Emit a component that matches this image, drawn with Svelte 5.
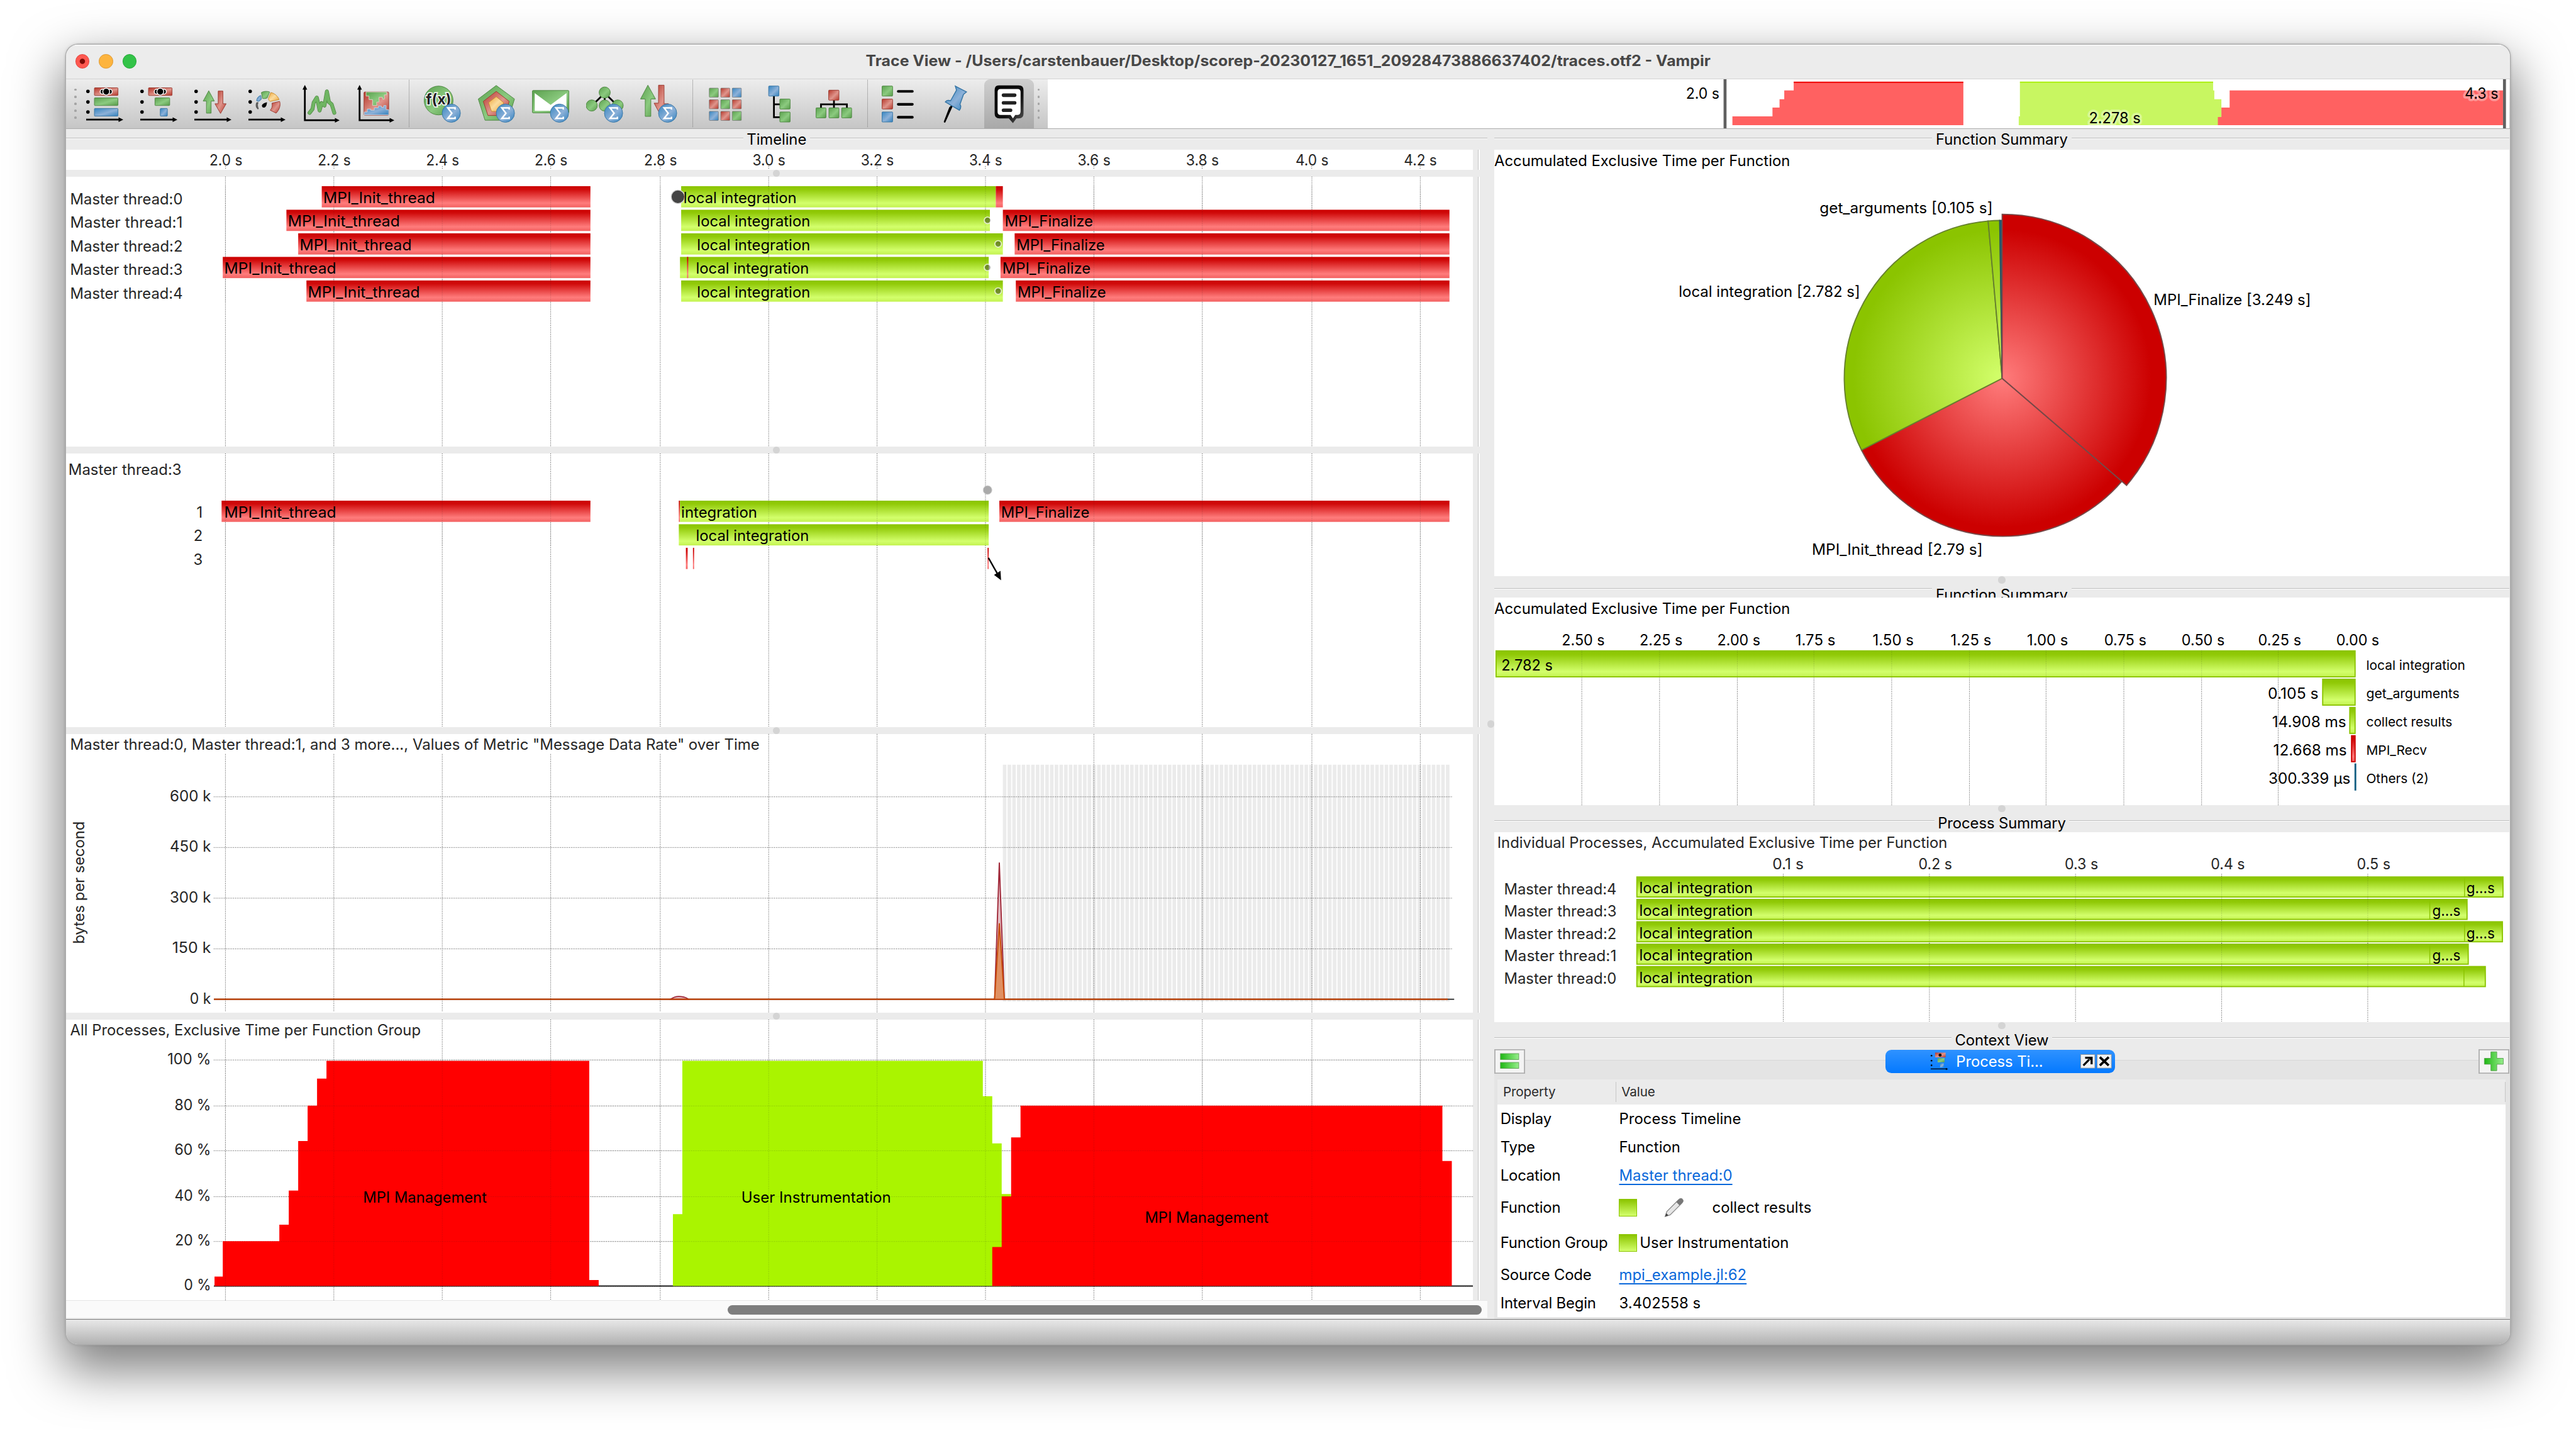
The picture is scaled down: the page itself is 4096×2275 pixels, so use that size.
<script>
  const gridX = [382, 566, 750, 934, 1120, 1304, 1488, 1672, 1856, 2040, 2226, 2410];
  const axis = ['2.0 s', '2.2 s', '2.4 s', '2.6 s', '2.8 s', '3.0 s', '3.2 s', '3.4 s', '3.6 s', '3.8 s', '4.0 s', '4.2 s'];

  // each bar: start, end, colour
  const threads = [
    { bars: [[546, 1002, 'r'], [1156, 1690, 'g'], [1690, 1702, 'r']], labels: [[548.5, 'i'], [1160, 'l']] },
    { bars: [[486, 1002, 'r'], [1156, 1680, 'g'], [1702, 2460, 'r']], labels: [[488.5, 'i'], [1183, 'l'], [1705, 'f']], dot: 1676 },
    { bars: [[506, 1002, 'r'], [1156, 1702, 'g'], [1722, 2460, 'r']], labels: [[508.5, 'i'], [1183, 'l'], [1725, 'f']], dot: 1694 },
    { bars: [[378, 1002, 'r'], [1154, 1678, 'g'], [1166, 1168, 'r'], [1698, 2460, 'r']], labels: [[380.5, 'i'], [1181, 'l'], [1701, 'f']], dot: 1676 },
    { bars: [[520, 1002, 'r'], [1156, 1702, 'g'], [1724, 2460, 'r']], labels: [[522.5, 'i'], [1183, 'l'], [1727, 'f']], dot: 1694 }
  ];
  const names = {
    i: ['MPI_Init_thread', 190],
    l: ['local integration', 192],
    f: ['MPI_Finalize', 150],
    n: ['integration', 129]
  };
  const stack = [
    { bars: [[376, 1002, 'r'], [1152, 1154, 'r'], [1154, 1678, 'g'], [1696, 2460, 'r']], labels: [[380.5, 'i'], [1156, 'n'], [1699, 'f']] },
    { bars: [[1152, 1678, 'g']], labels: [[1181, 'l']] },
    { bars: [[1164, 1167, 'r'], [1176, 1178, 'r'], [1676, 1678, 'r']], labels: [] }
  ];
  const rateTicks = [[1352, '600 k', 70], [1438, '450 k', 70], [1524, '300 k', 70], [1610, '150 k', 66], [1696, '0 k', 36]];
  const pctTicks = [[1798, '100 %', 74], [1876, '80 %', 62], [1952, '60 %', 62], [2030, '40 %', 62], [2106, '20 %', 61], [2182, '0 %', 46]];
  const stripes = Array.from({ length: 95 }, (_, k) => 1702 + k * 8);

  const sumTicks = [
    [2684, '2.50 s', 73], [2816, '2.25 s', 73], [2948, '2.00 s', 73], [3078, '1.75 s', 68], [3210, '1.50 s', 70], [3342, '1.25 s', 69],
    [3472, '1.00 s', 70], [3604, '0.75 s', 72], [3736, '0.50 s', 73], [3866, '0.25 s', 73]
  ];
  const sums = [
    { x: 2538, c: 'g', v: '2.782 s', w: 87, vx: 2636, n: 'local integration', nw: 168 },
    { x: 3941, c: 'g', v: '0.105 s', w: 86, vx: 3936, n: 'get_arguments', nw: 158 },
    { x: 3987, c: 'g', v: '14.908 ms', w: 126, vx: 3983, n: 'collect results', nw: 146 },
    { x: 3990, c: 'r', v: '12.668 ms', w: 125, vx: 3984, n: 'MPI_Recv', nw: 103 },
    { x: 3996, c: 'b', v: '300.339 µs', w: 139, vx: 3990, n: 'Others (2)', nw: 106 }
  ];
  const procTicks = [[3026, '0.1 s', 53], [3274, '0.2 s', 57], [3522, '0.3 s', 57], [3770, '0.4 s', 58], [4018, '0.5 s', 57]];
  const procs = [
    { n: 4, split: 4182, end: 4249, g: 4187 },
    { n: 3, split: 4123, end: 4188, g: 4129 },
    { n: 2, split: 4182, end: 4248, g: 4187 },
    { n: 1, split: 4123, end: 4190, g: 4129 },
    { n: 0, split: 4181, end: 4219 }
  ];

  // pie slices run clockwise from twelve o'clock
  function slice(a0, a1, r) {
    const p = (a) => {
      const t = (a * Math.PI) / 180;
      return `${(3398 + r * Math.sin(t)).toFixed(2)} ${(642 - r * Math.cos(t)).toFixed(2)}`;
    };
    return `M3398 642L${p(a0)}A${r} ${r} 0 0 1 ${p(a1)}Z`;
  }
  const slices = [
    { d: slice(130.7, 243, 268), f: 'url(#pieRed)', s: '#774848' },
    { d: slice(243, 354.9, 268), f: 'url(#pieGreen)', s: '#66802e' },
    { d: slice(354.9, 359.1, 268), f: 'url(#pieGreen)', s: '#66802e' },
    { d: slice(359.1, 360, 268), f: '#1f5f78', s: '#2b5560' },
    { d: slice(0, 130.7, 278.5), f: 'url(#pieRed)', s: '#774848' }
  ];

  const groups = [
    ['timeline', 'counters', 'messages', 'gauge', 'line', 'area'],
    ['fx', 'pentagon', 'mail', 'calls', 'io'],
    ['matrix', 'tree', 'org'],
    ['legend', 'pin', 'note']
  ];
  const grid9 = ['g', 'r', 'b', 'r', 'g', 'r', 'b', 'r', 'g'];
</script>

{#snippet t(x, y, s, w, cls = '')}
  <text class={cls} {x} y={y + 0.7} textLength={w} lengthAdjust="spacingAndGlyphs">{s}</text>
{/snippet}

{#snippet bar(b, y)}
  <rect x={b[0]} {y} width={b[1] - b[0]} height="36" fill="url(#bar-{b[2]})" />
{/snippet}

{#snippet overlay(xs, y0, y1)}
  {#each xs as x}<line class="dots faint" x1={x + 0.5} x2={x + 0.5} {y1} y2={y0} />{/each}
{/snippet}

{#snippet header(title, kind)}
  <div class="group {kind}">
    {#if kind !== 'first'}<i class="knob"></i>{/if}
    <span class="rule"></span><span class="caption">{title}</span><span class="rule"></span>
  </div>
{/snippet}

{#snippet sigma()}
  <circle cx="46.5" cy="49" r="15.5" fill="url(#ib)" stroke="#3474a4" />
  <path d="M53 43V40H40.5L47.5 49L40.5 58H53V55" fill="none" stroke="#fff" stroke-width="2.6" />
{/snippet}

{#snippet timeAxis()}
  <circle cx="3" cy="12" r="3" /><circle cx="3" cy="30" r="3" /><circle cx="3" cy="47" r="3" />
  <path d="M0 58.5H55V56L63 60L55 64V61.5H0Z" />
{/snippet}

{#snippet film(x)}
  <g stroke="#fff" stroke-width="1.5">
    <circle cx={x - 6} cy="12.5" r="4.2" /><circle cx={x + 6} cy="12.5" r="4.2" /><circle cx={x} cy="12.5" r="5.8" />
  </g>
{/snippet}

{#snippet icon(name)}
  <svg class="icon" viewBox="0 0 64 66">
    {#if name === 'timeline'}
      {@render timeAxis()}
      <g stroke-width="1"><rect x="14" y="6" width="40" height="13" rx="1" fill="url(#ir)" stroke="#99392f" /><rect x="14" y="23" width="40" height="13" rx="1" fill="url(#ig)" stroke="#4c8640" /><rect x="14" y="41" width="40" height="13" rx="1" fill="url(#ib)" stroke="#3474a4" /></g>
      {@render film(34)}
    {:else if name === 'counters'}
      {@render timeAxis()}
      <rect x="14" y="6" width="40" height="13" rx="1" fill="url(#ir)" stroke="#99392f" /><rect x="25" y="23" width="25" height="13" rx="1" fill="url(#ig)" stroke="#4c8640" /><rect x="34" y="41" width="12" height="13" rx="1" fill="url(#ib)" stroke="#3474a4" />
      {@render film(34)}
    {:else if name === 'messages'}
      {@render timeAxis()}
      <path d="M24.5 11L34 28.500H28.500V49H20.500V28.500H15Z" fill="url(#ig)" stroke="#4c8640" />
      <path d="M44.500 49.500L54 33H48.500V11.500H40.500V33H35Z" fill="url(#ir)" stroke="#99392f" />
    {:else if name === 'gauge'}
      {@render timeAxis()}
      <path d="M14 31C12 35 13 40 16 42L17 41.500C15.500 38 15 34 16.500 31Z" fill="#666" stroke="#333" stroke-width=".8" />
      <path d="M14 28C14 24 17 20 21 19L22 25C21 27 19 28 17 29Z" fill="url(#ib)" stroke="#3474a4" />
      <path d="M22 14C26 11.500 32 11.500 36 13L32 23C30 24.500 27 24.500 24 24Z" fill="url(#ig)" stroke="#4c8640" />
      <path d="M38 14C44 15 50 20 52 26L37 29C35 28 34 26 34 24Z" fill="url(#iy)" stroke="#c58a2c" />
      <path d="M40 32L53 29C55 35 53 43 47 49L37 44C40 41 41 37 40 32Z" fill="url(#ir)" stroke="#99392f" />
      <path d="M31.500 30.500C24 32 21 36 24 39C28 41 31 38 31.500 30.500Z" />
    {:else if name === 'line' || name === 'area'}
      <path d="M2.500 62.500V9H0L4 1L8 9H5.500V59.500H55V57L63 61L55 65V62.500Z" />
      {#if name === 'line'}
        <path d="M12 48.500L17 42L19 31L24.200 22.500L26.500 32L29 44.500L32.500 32L37.300 36L41.400 12L44.800 30L49.500 34L54 48.500" fill="none" stroke="#4c8640" stroke-width="6.500" stroke-linejoin="round" stroke-linecap="round" />
        <path d="M12 48.500L17 42L19 31L24.200 22.500L26.500 32L29 44.500L32.500 32L37.300 36L41.400 12L44.800 30L49.500 34L54 48.500" fill="none" stroke="#6fb562" stroke-width="5" stroke-linejoin="round" stroke-linecap="round" />
      {:else}
        <rect x="11.500" y="13" width="42" height="39.500" rx="1.500" fill="url(#ir)" stroke="#99392f" />
        <path d="M15 13V20H20V26H26V36H33V30H37V22H43V25H46V18H50V13Z" fill="url(#ig)" stroke="#d8d8c8" />
        <path d="M12 52V47H17V42H23V44H29V40H36V37H41V39H45V36H49V43H53.500V52Z" fill="url(#ib)" stroke="#c8d4e0" />
      {/if}
    {:else if name === 'fx'}
      <circle cx="25" cy="27.500" r="24.500" fill="url(#ig)" stroke="#4c8640" />
      <text class="fx" x="25" y="34" text-anchor="middle">f(x)</text>
      {@render sigma()}
    {:else if name === 'pentagon'}
      <path d="M31 2L62 25L51 61H12L0.500 25Z" fill="url(#ig)" stroke="#4c8640" />
      <path d="M31 12L53 29L46 53H17L9 29Z" fill="url(#ir)" stroke="#99392f" />
      <path d="M31 21L43.500 31L39 46H23L18 31Z" fill="url(#iy)" stroke="#c58a2c" />
      {@render sigma()}
    {:else if name === 'mail'}
      <rect x=".5" y="10.500" width="62" height="38" rx="1.500" fill="url(#ig)" stroke="#4c8640" />
      <path d="M4.500 15V45H58.500V15L31.500 35Z" fill="#fff" />
      {@render sigma()}
    {:else if name === 'calls'}
      <path d="M31.500 15L10 36M31.500 15V36M31.500 15L53 36" stroke="#000" stroke-width="3" />
      <g fill="url(#ig)" stroke="#4c8640"><circle cx="31.500" cy="14" r="9.500" /><circle cx="9.500" cy="36" r="9.500" /><circle cx="31.500" cy="36" r="9.500" /><circle cx="53.500" cy="36" r="9.500" /></g>
      {@render sigma()}
    {:else if name === 'io'}
      <path d="M13 1.500L26 25H18V54.500H8.500V25H.500Z" fill="url(#ig)" stroke="#4c8640" />
      <path d="M31 1.500H40.500V33H48L36 55L23.500 32H31Z" fill="url(#ir)" stroke="#99392f" />
      {@render sigma()}
    {:else if name === 'matrix'}
      {#each grid9 as c, k}
        <rect x={4 + (k % 3) * 19.500} y={6.500 + Math.floor(k / 3) * 19.700} width="15.500" height="15.500" rx="1" fill="url(#i{c})" stroke="#777" stroke-width=".8" />
      {/each}
    {:else if name === 'tree'}
      <path d="M22 15V56H34M22 34H34" fill="none" stroke="#000" stroke-width="3" />
      <rect x="13" y="3" width="17.500" height="17" rx="1" fill="url(#ib)" stroke="#3474a4" />
      <rect x="32" y="25" width="17.500" height="17" rx="1" fill="url(#ig)" stroke="#4c8640" />
      <rect x="32" y="47" width="17.500" height="17" rx="1" fill="url(#ig)" stroke="#4c8640" />
    {:else if name === 'org'}
      <path d="M31 26V42M9 42V34H53V42" fill="none" stroke="#000" stroke-width="3" />
      <rect x="22" y="10" width="17.500" height="17" rx="1" fill="url(#ir)" stroke="#99392f" />
      <g fill="url(#ig)" stroke="#4c8640"><rect x=".5" y="40" width="17" height="17" rx="1" /><rect x="22.500" y="40" width="17" height="17" rx="1" /><rect x="44" y="40" width="17" height="17" rx="1" /></g>
    {:else if name === 'legend'}
      <rect x=".5" y="3" width="18" height="17" rx="1" fill="url(#ig)" stroke="#4c8640" />
      <rect x=".5" y="25" width="18" height="17" rx="1" fill="url(#ir)" stroke="#99392f" />
      <rect x=".5" y="47" width="18" height="17" rx="1" fill="url(#ib)" stroke="#3474a4" />
      <path d="M28 12H52M28 34H52M28 56H52" stroke="#000" stroke-width="4.500" stroke-linecap="round" />
    {:else if name === 'pin'}
      <path d="M26 37L14 63.500L23 40Z" stroke="#000" stroke-width="3" stroke-linejoin="round" />
      <path d="M32 3L51 13L46 17L40 34C42 37 42 40 39 44L15 30C17 27 21 27 24 28L34 10Z" fill="url(#ib)" stroke="#3474a4" stroke-width="1.500" />
    {:else}
      <path d="M14 2H48Q56 2 56 10V50Q56 58 48 58H44L38 66L31 58H15Q7 58 7 50V10Q7 2 14 2Z" fill="url(#ik)" />
      <path d="M17 8H46Q51 8 51 13V46Q51 52 46 52H42L38 58L34 52H17Q12 52 12 47V13Q12 8 17 8Z" fill="#fff" />
      <path d="M22 18.500H41M22 31.500H41M22 44H34" stroke="#222" stroke-width="6" stroke-linecap="round" />
    {/if}
  </svg>
{/snippet}

<svg class="defs" width="0" height="0">
  <defs>
    <linearGradient id="bar-r" x2="0" y2="1"><stop offset="0" stop-color="#cc0000" /><stop offset=".15" stop-color="#d00a0a" /><stop offset=".8" stop-color="#ff7c7c" /><stop offset="1" stop-color="#f26060" /></linearGradient>
    <linearGradient id="bar-g" x2="0" y2="1"><stop offset="0" stop-color="#8bc400" /><stop offset=".15" stop-color="#91ca08" /><stop offset=".8" stop-color="#d3ff6c" /><stop offset="1" stop-color="#c3f251" /></linearGradient>
    <linearGradient id="bar-b" x2="0" y2="1"><stop offset="0" stop-color="#0c5d80" /><stop offset="1" stop-color="#0c5d80" /></linearGradient>
    <radialGradient id="pieRed" gradientUnits="userSpaceOnUse" cx="3398" cy="642" r="272"><stop offset="0" stop-color="#ff7c7c" /><stop offset=".93" stop-color="#cc0000" /></radialGradient>
    <radialGradient id="pieGreen" gradientUnits="userSpaceOnUse" cx="3398" cy="642" r="272"><stop offset="0" stop-color="#d3ff6c" /><stop offset=".93" stop-color="#8bc400" /></radialGradient>
    <linearGradient id="ig" x2="1" y2="1"><stop offset="0" stop-color="#5ba04e" /><stop offset=".55" stop-color="#8bca7f" /><stop offset="1" stop-color="#579b4a" /></linearGradient>
    <linearGradient id="ir" x2="1" y2="1"><stop offset="0" stop-color="#b5372a" /><stop offset=".55" stop-color="#df958c" /><stop offset="1" stop-color="#b5372a" /></linearGradient>
    <linearGradient id="ib" x2="1" y2="1"><stop offset="0" stop-color="#3585c0" /><stop offset=".55" stop-color="#8db1d8" /><stop offset="1" stop-color="#3181bd" /></linearGradient>
    <linearGradient id="iy" x2="1" y2="1"><stop offset="0" stop-color="#efa53a" /><stop offset=".5" stop-color="#fbdc9e" /><stop offset="1" stop-color="#efa53a" /></linearGradient>
    <linearGradient id="ik" x2="1" y2="1"><stop offset="0" stop-color="#000" /><stop offset=".6" stop-color="#111" /><stop offset="1" stop-color="#555" /></linearGradient>
    <linearGradient id="iplus" x2="1"><stop offset="0" stop-color="#1fb714" /><stop offset="1" stop-color="#96ee8c" /></linearGradient>
  </defs>
</svg>

<div class="desktop">
  <div class="window">
    <header class="titlebar">
      <div class="lights"><b class="red"></b><b class="amber"></b><b class="green"></b></div>
      <svg class="title" viewBox="1461 75 1450 57">
        <text x="1469" y="111.500" textLength="1434" lengthAdjust="spacingAndGlyphs">Trace View - /Users/carstenbauer/Desktop/scorep-20230127_1651_20928473886637402/traces.otf2 - Vampir</text>
      </svg>
    </header>

    <div class="toolbar">
      <div class="tools">
        <div class="grip"><i></i><i></i><i></i><i></i><i></i></div>
        {#each groups as g, k}
          {#if k}<span class="sep"></span>{/if}
          <div class="set">
            {#each g as name}
              <button class:active={name === 'note'}>{@render icon(name)}</button>
            {/each}
          </div>
        {/each}
        <div class="grip end"><i></i><i></i><i></i><i></i><i></i></div>
      </div>
      <svg class="overview" viewBox="1778 134 2481 84">
        <path d="M2940 212V197H3008V182H3020V168H3028V153H3044V139H3332V212Z" fill="#ff6161" />
        <path d="M3044 138H3332V140.500H3044Z" fill="#f01010" />
        <path d="M3426 212V197H3428V139H3756V153H3758V168H3770V212Z" fill="#c8f661" />
        <path d="M3428 138H3756V140H3428Z" fill="#a6ee00" />
        <path d="M3764 212V198H3770V182H3784V153H4248V212Z" fill="#ff6161" />
        <rect x="2925" y="134" width="5" height="84" fill="#606060" />
        <rect x="4248" y="134" width="5" height="84" fill="#606060" />
        {@render t(2861, 166, '2.0 s', 57)}
        {@render t(4183, 166, '4.3 s', 57, 'halo')}
        {@render t(3545, 208, '2.278 s', 88, 'halo')}
      </svg>
    </div>

    <main>
      <section class="left">
        {@render header('Timeline', 'first')}
        <div class="pane">
          <svg class="p0" viewBox="112 254 2388 34">
            {#each axis as a, k}
              {@render t(gridX[k] - 27, 280, a, 56, 'dim')}
              <line class="dots" x1={gridX[k] + 0.5} x2={gridX[k] + 0.5} y1="282" y2="288" />
            {/each}
          </svg><span class="edge"></span>
        </div>
        <div class="split"><i class="knob"></i></div>

        <div class="pane">
          <svg class="p1" viewBox="112 300 2388 458">
            {#each gridX as x}<line class="dots" x1={x + 0.5} x2={x + 0.5} y1="300" y2="758" />{/each}
            {#each threads as row, k}
              {@render t(119, 346 + k * 40, 'Master thread:' + k, 191, 'dim')}
              {#each row.bars as b}{@render bar(b, 316 + k * 40)}{/each}
            {/each}
            {@render overlay(gridX, 512, 316)}
            <circle cx="1150.500" cy="334" r="11.500" fill="#444" stroke="#d8d8d8" stroke-width="1.500" />
            {#each threads as row, k}
              {#each row.labels as l}{@render t(l[0], 344 + k * 40, names[l[1]][0], names[l[1]][1])}{/each}
              {#if row.dot}<circle cx={row.dot} cy={334 + k * 40} r="5.500" fill="#000" fill-opacity=".38" stroke="#fff" stroke-opacity=".7" stroke-width="2" />{/if}
            {/each}
          </svg><span class="edge"></span>
        </div>
        <div class="split"><i class="knob"></i></div>

        <div class="pane">
          <svg class="p2" viewBox="112 770 2388 464">
            {#each gridX as x}<line class="dots" x1={x + 0.5} x2={x + 0.5} y1="770" y2="1234" />{/each}
            {@render t(116, 805.500, 'Master thread:3', 192, 'dim')}
            {#each stack as row, k}
              <text class="dim" x="344" y={878.500 + k * 40} text-anchor="end">{k + 1}</text>
              {#each row.bars as b}{@render bar(b, 850 + k * 40)}{/each}
            {/each}
            {@render overlay(gridX, 926, 850)}
            {#each stack as row, k}
              {#each row.labels as l}{@render t(l[0], 878 + k * 40, names[l[1]][0], names[l[1]][1])}{/each}
            {/each}
            <circle cx="1676" cy="832" r="7.500" fill="#aaa" stroke="#d4d4d4" />
            <path d="M1677.500 947L1695 978" stroke="#000" stroke-width="2.500" />
            <path d="M1699 985L1687 976L1698 969Z" />
          </svg><span class="edge"></span>
        </div>
        <div class="split"><i class="knob"></i></div>

        <div class="pane">
          <svg class="p3" viewBox="112 1246 2388 472">
            {#each stripes as x}<rect {x} y="1298" width="6" height="402" fill="#ebebeb" />{/each}
            {#each gridX as x}<line class="dots" x1={x + 0.5} x2={x + 0.5} y1={x < 1290 ? 1280 : 1246} y2="1718" />{/each}
            {@render t(119, 1272, 'Master thread:0, Master thread:1, and 3 more..., Values of Metric "Message Data Rate" over Time', 1170, 'dim')}
            {#each rateTicks as r}
              <text class="dim" x="358" y={r[0] + 8} text-anchor="end" textLength={r[2]} lengthAdjust="spacingAndGlyphs">{r[1]}</text>
              {#if r[0] < 1690}<line class="dots" x1="363" x2="2466" y1={r[0] + 0.5} y2={r[0] + 0.5} />{/if}
            {/each}
            <text class="dim" transform="translate(143 1602) rotate(-90)" textLength="208" lengthAdjust="spacingAndGlyphs">bytes per second</text>
            <path d="M363 1696H2468" stroke="#222" stroke-width="2" />
            <path d="M1138 1696Q1146 1690 1156 1691.500T1168 1696Z" fill="#e3bcc2" stroke="#9f2738" stroke-width="2" />
            <path d="M1688 1696L1696 1464L1704.500 1696Z" fill="#e3bcc2" stroke="#9f2738" stroke-width="2" />
            <path d="M1688 1696L1696 1567L1704.500 1696Z" fill="#e09062" stroke="#c74a08" stroke-width="2" />
            <path d="M363 1696H1688M1704 1696H2457" stroke="#c24206" stroke-width="2.500" />
          </svg><span class="edge"></span>
        </div>
        <div class="split"><i class="knob"></i></div>

        <div class="pane">
          <svg class="p4" viewBox="112 1730 2388 476">
            {#each gridX as x}<line class="dots" x1={x + 0.5} x2={x + 0.5} y1={x < 715 ? 1764 : 1730} y2="2206" />{/each}
            {@render t(119, 1756.500, 'All Processes, Exclusive Time per Function Group', 595, 'dim')}
            {#each pctTicks as p}
              <text class="dim" x="358" y={p[0] + 7.500} text-anchor="end" textLength={p[2]} lengthAdjust="spacingAndGlyphs">{p[1]}</text>
              <line class="dots" x1="363" x2="2500" y1={p[0] + 0.5} y2={p[0] + 0.5} />
            {/each}
            <path d="M363 2182H2500" stroke="#222" stroke-width="2" />
            <path d="M364 2182V2166H378V2106H474V2078H490V2020H506V1936H522V1876H538V1830H554V1800H1000V2172H1016V2182Z" fill="#f00" />
            <path d="M1142 2182V2060H1158V1800H1668V1860H1684V1940H1700V2026H1716V2182Z" fill="#aaf400" />
            <path d="M1684 2182V2116H1700V2030H1716V1930H1732V1876H2448V1970H2464V2182Z" fill="#f00" />
            {@render overlay([382, 566, 750, 934, 1304, 1488, 1672, 1856, 2040, 2226, 2410], 2182, 1800)}
            {#each pctTicks as p}<line class="dots faint" x1="474" x2="2464" y1={p[0] + 0.5} y2={p[0] + 0.5} />{/each}
            {@render t(616, 2040, 'MPI Management', 210)}
            {@render t(1258, 2040, 'User Instrumentation', 254)}
            {@render t(1943, 2074, 'MPI Management', 210)}
          </svg><span class="edge"></span>
        </div>
        <div class="scroll"><i></i></div>
      </section>

      <div class="divider"><i class="knob"></i></div>

      <section class="right">
        {@render header('Function Summary', 'first')}
        <svg class="q1" viewBox="2536 254 1723 724">
          {@render t(2536, 281, 'Accumulated Exclusive Time per Function', 502)}
          {#each slices as s}<path d={s.d} fill={s.f} stroke={s.s} stroke-width="2" />{/each}
          {@render t(3088, 361, 'get_arguments [0.105 s]', 294)}
          {@render t(2849, 503, 'local integration [2.782 s]', 308)}
          {@render t(3655, 517, 'MPI_Finalize [3.249 s]', 267)}
          {@render t(3075, 941, 'MPI_Init_thread [2.79 s]', 290)}
        </svg>

        {@render header('Function Summary', 'clipped')}
        <svg class="q2" viewBox="2536 1014 1723 352">
          {@render t(2536, 1041, 'Accumulated Exclusive Time per Function', 502)}
          {#each sumTicks as s}
            {@render t(s[0] - s[2] / 2 + 3, 1094, s[1], s[2])}
            <line class="dots" x1={s[0] + 0.5} x2={s[0] + 0.5} y1="1104" y2="1366" />
          {/each}
          {@render t(3965, 1094, '0.00 s', 73)}
          {#each sums as s, k}
            <rect x={s.x + 1} y={1104.500 + k * 48} width={Math.max(1, 3997 - s.x - 1)} height="44" fill="url(#bar-{s.c})" stroke={s.c === 'g' ? '#8bc400' : s.c === 'r' ? '#cc0000' : '#0c5d80'} stroke-width="2" />
          {/each}
          {#each sumTicks as s}<line class="dots faint" x1={s[0] + 0.5} x2={s[0] + 0.5} y1="1104" y2="1148" />{/each}
          {#each sums as s, k}
            {@render t(s.vx - s.w - 1, 1137.500 + k * 48, s.v, s.w)}
            {@render t(4016, 1136.500 + k * 48, s.n, s.nw, 'small')}
          {/each}
        </svg>

        {@render header('Process Summary', 'other')}
        <svg class="q3" viewBox="2536 1412 1723 322">
          {@render t(2541, 1438.500, 'Individual Processes, Accumulated Exclusive Time per Function', 764, 'dim')}
          {#each procTicks as p}
            {@render t(p[0] - 18, 1474, p[1], p[2], 'dim')}
            <line class="dots" x1={p[0] + 0.5} x2={p[0] + 0.5} y1="1483" y2="1734" />
          {/each}
          {#each procs as p, k}
            {@render t(2552.500, 1516.500 + k * 37.900, 'Master thread:' + p.n, 191, 'dim')}
            <rect x="2778" y={1488 + k * 38} width={p.end - 2779} height="34" fill="url(#bar-g)" stroke="#8bc400" stroke-width="2" />
            <rect x={p.split} y={1488 + k * 38} width="1.500" height="34" fill="#8bc400" />
          {/each}
          {#each procTicks as p}<line class="dots faint" x1={p[0] + 0.5} x2={p[0] + 0.5} y1="1487" y2="1675" />{/each}
          {#each procs as p, k}
            {@render t(2782, 1515 + k * 38.100, 'local integration', 193)}
            {#if p.g}{@render t(p.g - 1, 1515 + k * 38.100, 'g...s', 48)}{/if}
          {/each}
        </svg>

        {@render header('Context View', 'other')}
        <div class="tabs">
          <button class="square">
            <svg viewBox="0 0 52 42"><g fill="url(#iplus)" stroke="#5aa050"><rect x="10.500" y="7.500" width="31" height="10" /><rect x="10.500" y="22.500" width="31" height="10" /></g></svg>
          </button>
          <div class="tab">
            <svg class="tabicon" viewBox="0 0 64 66">{@render timeAxis()}<rect x="16" y="1" width="38" height="17" fill="url(#ir)" /><rect x="25" y="21" width="25" height="15" fill="url(#ig)" /><rect x="34" y="40" width="13" height="14" fill="url(#ib)" /><circle cx="34" cy="10" r="5.500" /></svg>
            <span class="tabname">Process Ti...</span>
            <svg class="tabbtns" viewBox="0 0 54 24"><g fill="#f2f2f2" stroke="#999"><rect x=".5" y=".5" width="24" height="23" /><rect x="28.500" y=".5" width="24" height="23" /></g><path d="M5 19L15 9M8 6H19V17" fill="none" stroke="#000" stroke-width="3.500" /><path d="M12 5H20V13Z" /><path d="M33 5L48 19M48 5L33 19" stroke="#000" stroke-width="4" /></svg>
          </div>
          <button class="square">
            <svg viewBox="0 0 52 42"><path d="M21 4.500H31V15.500H42V25.500H31V36.500H21V25.500H10V15.500H21Z" fill="url(#iplus)" stroke="#5aa050" /></svg>
          </button>
        </div>
        <div class="context">
          <div class="thead"><span class="k">Property</span><span class="v">Value</span></div>
          <div class="tbody">
            <div class="tr"><span class="k">Display</span><span>Process Timeline</span></div>
            <div class="tr"><span class="k">Type</span><span>Function</span></div>
            <div class="tr"><span class="k">Location</span><a href="#loc">Master thread:0</a></div>
            <div class="tr tall"><span class="k">Function</span><i class="swatch"></i>
              <svg class="pencil" viewBox="0 0 36 36"><path d="M2 34L5 25L26 4Q30 0 33 3T32 10L11 31Z" fill="#e6e6e6" stroke="#888" stroke-width="1.500" /><path d="M26 4Q30 0 33 3T32 10L28 14L22 8Z" fill="#777" /><path d="M2 34L4 28L8 32Z" fill="#444" /></svg>
              <span>collect results</span></div>
            <div class="tr tall"><span class="k">Function Group</span><i class="swatch near"></i><span>User Instrumentation</span></div>
            <div class="tr"><span class="k">Source Code</span><a href="#src">mpi_example.jl:62</a></div>
            <div class="tr"><span class="k">Interval Begin</span><span>3.402558 s</span></div>
          </div>
        </div>
      </section>
    </main>
    <footer></footer>
  </div>
</div>

<style>
  :global(body) { background: #fff; overflow: hidden; }
  .defs { position: absolute; }
  .desktop {
    zoom: 0.93687;
    box-sizing: border-box;
    width: 4372px;
    height: 2428px;
    padding: 76px 112px 0 112px;
    overflow: hidden;
    font: 25.500px/28px Inter, "Liberation Sans", sans-serif;
    letter-spacing: -0.1px;
    color: #000;
  }
  .window {
    display: flex;
    flex-direction: column;
    height: 2205px;
    border-radius: 20px;
    overflow: hidden;
    background: #ebebeb;
    box-shadow: 0 0 0 1.500px #adadad, 0 0 6px rgba(0, 0, 0, .25), 0 36px 84px 8px rgba(0, 0, 0, .5);
  }
  svg { display: block; flex: none; }
  text { fill: #000; font: 25.500px Inter, "Liberation Sans", sans-serif; letter-spacing: 0; }
  text.dim { fill: #262626; }
  text.small { font-size: 22px; }
  text.halo { paint-order: stroke; stroke: rgba(255, 255, 255, .35); stroke-width: 8px; stroke-linejoin: round; }
  text.fx { font-weight: 700; font-size: 25px; paint-order: stroke; stroke: #fff; stroke-width: 3px; fill: #222; }
  .dots { stroke: #222; stroke-width: 1; stroke-dasharray: 1 2; }
  .faint { opacity: .3; }
  i { display: block; }
  button { border: 0; padding: 0; background: none; }

  .titlebar { position: relative; display: flex; align-items: center; justify-content: center; height: 57px; border-bottom: 2px solid #d2d2d2; background: #ececec; box-shadow: inset 0 2px #f8f8f8; }
  .lights { position: absolute; left: 16px; top: 16px; display: flex; gap: 16px; }
  .lights b { box-sizing: border-box; width: 24px; height: 24px; border-radius: 50%; border: 1px solid; }
  .lights .red { background: radial-gradient(circle, #7a0a06 0 4px, #fe5850 5px); border-color: #e2463f; }
  .lights .amber { background: #fdb43e; border-color: #de9a35; }
  .lights .green { background: #33c348; border-color: #27a83a; }
  .title { width: 1450px; height: 57px; }
  .title text { font-weight: 700; fill: #474747; }

  .toolbar { display: flex; height: 84px; border-bottom: 2px solid #acacac; background: linear-gradient(#ededed, #c6c6c6); }
  .tools { display: flex; align-items: center; width: 1666px; flex: none; }
  .grip { display: flex; flex-direction: column; gap: 8px; margin: 0 16px 0 14px; flex: none; }
  .grip.end { margin: 0 0 0 16px; }
  .grip i { width: 4px; height: 4px; border-radius: 50%; background: #a4a4a4; }
  .set { display: flex; flex: none; gap: 8px; margin: 0 -10px; }
  .set button { box-sizing: border-box; width: 84px; height: 84px; padding: 9px 10px; border-radius: 10px 10px 0 0; flex: none; }
  .set .active { background: linear-gradient(#cfcfcf, #a9a9a9); }
  .icon { width: 64px; height: 66px; }
  .sep { width: 0; height: 80px; margin: 0 24px; border-left: 2px dotted #808080; flex: none; }
  .overview { width: 2481px; height: 84px; background: #fff; }

  main { display: flex; flex: 1; min-height: 0; }
  .left { width: 2412px; display: flex; flex-direction: column; flex: none; }
  .right { width: 1723px; display: flex; flex-direction: column; flex: none; }
  .divider { width: 12px; display: flex; align-items: center; justify-content: center; flex: none; }
  .group { position: relative; box-sizing: border-box; display: flex; align-items: flex-start; overflow: hidden; flex: none; }
  .group.first { height: 35px; padding-top: 4px; }
  .group.clipped { height: 36px; padding-top: 18px; }
  .group.other { height: 46px; padding-top: 17px; }
  .rule { flex: 1; height: 1px; margin-top: 11px; background: #bcbcbc; border-bottom: 2px solid #fff; }
  .clipped .rule { margin-top: 2px; }
  .other .rule { margin-top: 9px; }
  .caption { padding: 0 6px; }
  .knob { width: 12px; height: 12px; border-radius: 50%; background: #d4d4d4; }
  .group .knob { position: absolute; top: 0; left: calc(50% - 6px); }
  .split { display: flex; justify-content: center; flex: none; }
  .pane { display: flex; flex: none; }
  .pane svg, .right > svg { background: #fff; }
  .p0 { width: 2388px; height: 34px; }
  .p1 { width: 2388px; height: 458px; }
  .p2 { width: 2388px; height: 464px; }
  .p3 { width: 2388px; height: 472px; }
  .p4 { width: 2388px; height: 476px; }
  .edge { width: 2px; margin-left: 8px; background: #fff; border-left: 1px solid #c4c4c4; }
  .q1 { width: 1723px; height: 724px; }
  .q2 { width: 1723px; height: 352px; }
  .q3 { width: 1723px; height: 322px; }
  .scroll { box-sizing: border-box; height: 30px; padding: 8px 9px 0 1123px; background: #fafafa; border-top: 2px solid #e6e6e6; flex: none; }
  .scroll i { height: 16px; border-radius: 8px; background: #7e7e7e; }

  .tabs { position: relative; z-index: 1; display: flex; align-items: center; justify-content: space-between; height: 42px; flex: none; background: linear-gradient(#ebebeb 18px, #d8d8d8 18px 19px, #e4e4e4 19px); }
  .square { box-sizing: border-box; width: 52px; height: 42px; background: #f4f4f4; box-shadow: inset 0 0 0 2px #b0b0b0; }
  .square svg { width: 52px; height: 42px; }
  .tab { box-sizing: border-box; display: flex; align-items: center; width: 390px; height: 40px; margin-left: -5px; padding: 0 5px 0 76px; border-radius: 10px; background: linear-gradient(#2f92ff, #0479ff); color: #fff; }
  .tabicon { width: 32px; height: 31px; }
  .tabname { flex: 1; padding: 2px 0 0 12px; }
  .tabbtns { width: 54px; height: 24px; }
  .context { flex: 1; padding: 10px 6px 3px 6px; background: #e4e4e4; display: flex; flex-direction: column; }
  .thead { display: flex; align-items: center; height: 42px; background: #ebebeb; font-size: 22px; color: #2c2c2c; box-sizing: border-box; }
  .thead .k { width: 191px; padding-left: 9px; }
  .thead .v { flex: 1; padding-left: 9px; border-left: 2px solid #c6c6c6; border-right: 2px solid #c6c6c6; line-height: 34px; }
  .tbody { flex: 1; background: #fff; letter-spacing: 0.05px; padding-top: 1px; }
  .tr { display: flex; align-items: center; height: 48px; }
  .tr.tall { height: 60px; }
  .tr span, .tr a { padding-top: 1px; }
  .tr .k { width: 201.500px; padding-left: 4.500px; letter-spacing: -0.2px; }
  .tr a { color: #0a68da; text-decoration: underline; text-underline-offset: 5px; text-decoration-thickness: 2px; }
  .swatch { box-sizing: border-box; width: 30px; height: 30px; border: 2px solid #8bc400; background: linear-gradient(#8bc400, #d3ff6c); }
  .swatch.near { margin-right: 5px; }
  .pencil { width: 36px; height: 34px; margin: 0 47px 0 45px; }

  footer { height: 42px; border-top: 2px solid #7c7c7c; background: linear-gradient(#e8e8e8, #b2b2b2); flex: none; }
</style>
